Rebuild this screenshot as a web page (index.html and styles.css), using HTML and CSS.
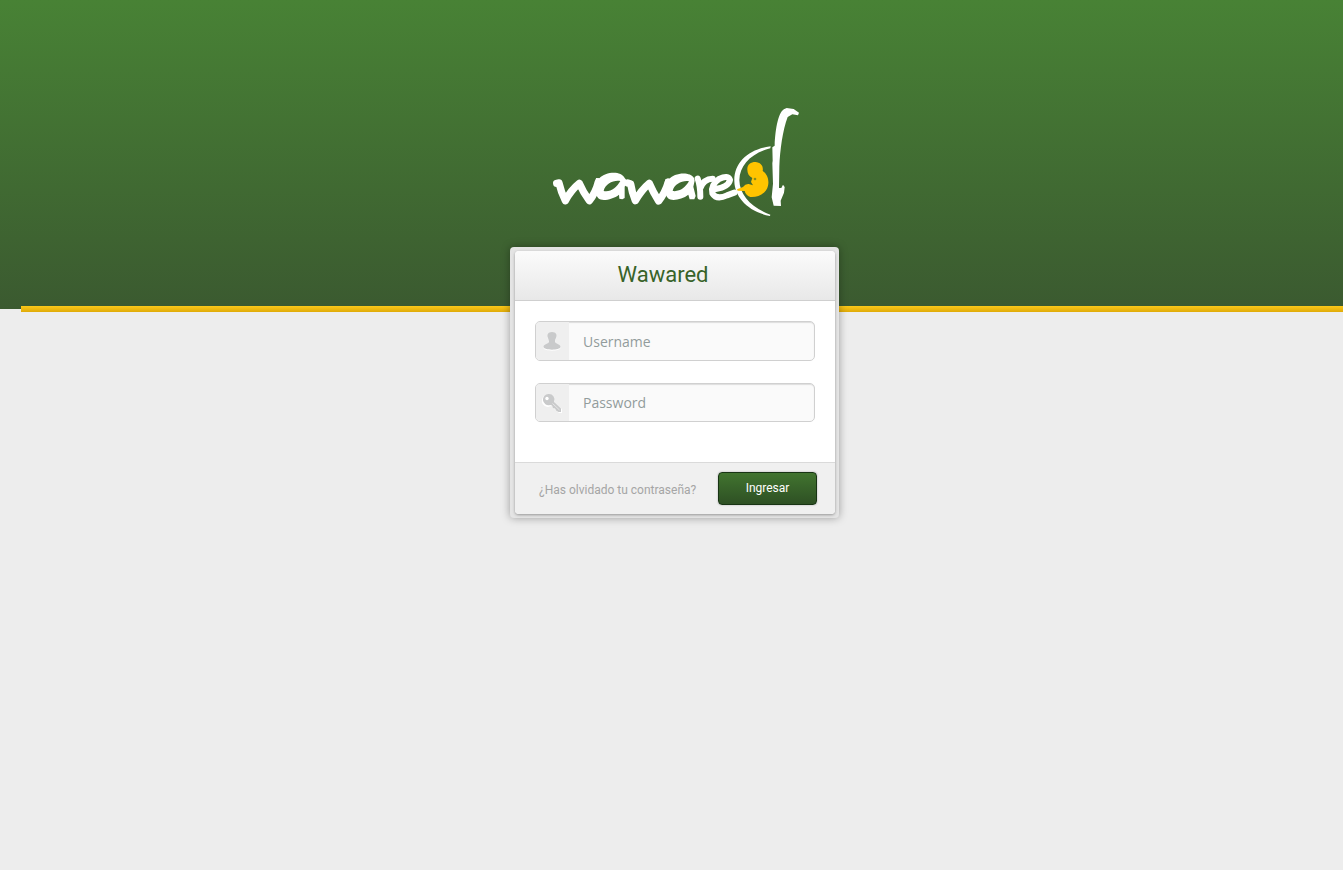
FILE: index.html
```html
<!DOCTYPE html>
<html lang="es">
<head>
<meta charset="utf-8">
<meta name="viewport" content="width=device-width, initial-scale=1">
<title>Wawared</title>
<link rel="stylesheet" href="styles.css">
</head>
<body>
<div class="backdrop"></div>
<main class="page">
  <svg class="logo" viewBox="15 24 747 324" role="img" aria-label="Wawared">
    <g class="letters">
      <path d="M35 250L42 249Q48 276 61 302Q78 270 103 250Q114 276 133 302Q152 278 160 246"/>
      <path d="M248 249L257 252Q261 278 271 302Q289 270 313 250Q324 276 341 303Q360 279 370 246"/>
      <path class="fine" d="M458 236Q466 257 466 290M466 265Q476 236 503 236"/>
      <path class="fine" d="M512 267Q550 261 555 240Q550 224 522 237Q496 255 502 280Q515 301 546 286L568 278"/>
    </g>
    <path class="white" fill-rule="evenodd" d="M153 234L163 235C181 215 228 211 239 234L244 240L239 262V294L232 298L223 296L222 284C204 298 171 306 160 295C149 282 149 255 153 234ZM176 273C198 277 215 262 226 243C207 239 180 251 176 273Z"/>
    <path class="white" fill-rule="evenodd" d="M361 238L371 239C387 217 435 213 447 234L449 242L445 260L452 288L448 298L434 298L430 284C412 298 381 305 369 295C358 282 356 258 361 238ZM383 273C405 276 421 262 432 244C414 240 387 252 383 273Z"/>
    <g transform="translate(375 0)">
      <path class="white" d="M302 139L301 145C245 159 209 195 208 240C209 286 244 322 301 344L300 348C233 335 194 291 193 244C191 185 239 147 302 139Z"/>
      <path class="white" d="M350 24L371 27L387 38L384 46L367 43L353 51C338 91 330 150 328 200L327 264L334 264L339 254L344 261L342 278L332 302L333 318L311 317L305 292L309 251L307 190L308 182L307 142L314 137C316 82 326 32 345 26Z"/>
      <path class="baby" d="M232 209C231 194 242 186 256 186C272 187 281 198 278 213C292 222 298 240 294 257C290 278 265 293 241 291C231 288 226 281 224 273L203 272L201 268L219 261Q226 251 236 252L249 256L243 246L247 234C237 229 232 220 232 209Z"/>
      <circle class="eye" cx="255" cy="237" r="4"/>
    </g>
  </svg>
  <form class="card">
    <div class="panel">
      <header class="title"><h1>Wawared</h1></header>
      <div class="fields">
        <label class="field">
          <span class="badge">
            <svg viewBox="0 0 18 20" width="18" height="20" aria-hidden="true">
              <path class="glow" d="M9 2C13 2 14.500 5 13 8C12 10 12 11 12 12C13 14 17.500 14 17.500 17C17 20.500 1 20.500 .5 17C.5 14 5 14 6 12C6 11 5.500 10 5 8C3.500 5 5 2 9 2Z"/>
              <path class="shape" d="M9 1C13 1 14.500 4 13 7C12 9 12 10 12 11C13 13 17.500 13 17.500 16C17 19.500 1 19.500 .5 16C.5 13 5 13 6 11C6 10 5.500 9 5 7C3.500 4 5 1 9 1Z"/>
            </svg>
          </span>
          <input type="text" placeholder="Username" aria-label="Username" autocomplete="username">
        </label>
        <label class="field short">
          <span class="badge">
            <svg viewBox="0 0 20 20" width="20" height="20" aria-hidden="true">
              <path class="glow" d="M7 2A6 6 0 1 0 9 13L12 14L13 17L15 18L17 20H20V16L12 10A6 6 0 0 0 7 2Z"/>
              <path class="shape" d="M6.500 1A5.600 5.600 0 1 0 8 12L10 12.500L11 15L13 15.500L14 17.500L16.500 19H19V15.500L12 9A5.600 5.600 0 0 0 6.500 1Z"/>
              <circle class="hole" cx="5" cy="5.500" r="1.700"/>
              <path class="groove" d="M10.500 10.500L17.500 17"/>
            </svg>
          </span>
          <input type="password" placeholder="Password" aria-label="Password" autocomplete="current-password">
        </label>
      </div>
      <footer class="actions">
        <a href="#">¿Has olvidado tu contraseña?</a>
        <button type="submit">Ingresar</button>
      </footer>
    </div>
  </form>
</main>
</body>
</html>
```
FILE: styles.css
```css
* {
  box-sizing: border-box;
}

body {
  margin: 0;
  min-height: 100vh;
  background: #ededed;
  font-family: Roboto, "Liberation Sans", sans-serif;
}

.backdrop {
  position: absolute;
  top: 0;
  left: 0;
  right: 0;
  height: 309px;
  background: linear-gradient(#488235, #3b5a30);
}

.backdrop::after {
  content: "";
  position: absolute;
  top: 306px;
  left: 21px;
  right: 0;
  height: 6px;
  background: linear-gradient(#fbc91a, #dfaa08);
}

.page {
  position: relative;
  display: flex;
  flex-direction: column;
  align-items: center;
  gap: 31px;
  padding: 108px 16px 40px 22px;
}

.logo {
  width: 249px;
  height: 108px;
}

.letters {
  fill: none;
  stroke: #fff;
  stroke-width: 22;
  stroke-linecap: round;
  stroke-linejoin: round;
}

.fine {
  stroke-width: 18;
}

.white {
  fill: #fff;
}

.baby {
  fill: #ffc400;
}

.eye {
  fill: #8a8e1b;
}

.card {
  width: 100%;
  max-width: 329px;
  padding: 4px 4px 4px 5px;
  border-radius: 4px;
  background: #e4e4e4;
  box-shadow: 0 0 8px rgba(0, 0, 0, 0.35);
}

.panel {
  overflow: hidden;
  border-radius: 4px;
  background: #fff;
  box-shadow: 0 1px 3px rgba(0, 0, 0, 0.35);
}

.title {
  height: 50px;
  padding-right: 24px;
  border-bottom: 1px solid #cfcfcf;
  background: linear-gradient(#fbfbfb, #e8e8e8);
}

.title h1 {
  margin: 0;
  color: #386329;
  font-size: 22px;
  font-weight: 400;
  line-height: 48px;
  text-align: center;
}

.fields {
  display: grid;
  gap: 22px;
  padding: 20px 20px 40px;
}

.field {
  display: flex;
  height: 40px;
  overflow: hidden;
  border: 1px solid #d0d0d0;
  border-radius: 5px;
  background: #fafafa;
  box-shadow: inset 0 1px 1px #ddd;
}

.field.short {
  height: 39px;
}

.badge {
  display: grid;
  flex: 0 0 33px;
  place-items: center;
  padding-right: 1px;
  background: #efefef;
}

.shape {
  fill: #c9cacb;
}

.glow,
.hole {
  fill: #fff;
}

.groove {
  fill: none;
  stroke: #e6e6e6;
}

.field input {
  flex: 1;
  min-width: 0;
  padding: 0 14px;
  border: 0;
  outline: 0;
  background: transparent;
  color: #555;
  font: 14px "Open Sans", sans-serif;
}

.field input::placeholder {
  color: #929c9c;
  opacity: 1;
}

.actions {
  display: flex;
  align-items: center;
  justify-content: space-between;
  height: 52px;
  padding: 0 18px 1px 24px;
  border-top: 1px solid #dadada;
  background: #f0f0f0;
}

.actions a {
  padding-top: 4px;
  color: #a5a5a5;
  font-size: 12px;
  text-decoration: none;
}

.actions button {
  width: 99px;
  height: 33px;
  padding: 0;
  border: 1px solid #183414;
  border-radius: 4px;
  background: linear-gradient(#41742f, #2e5024);
  box-shadow: 0 0 2px rgba(0, 0, 0, 0.3);
  color: #fff;
  font: 12px Roboto, "Liberation Sans", sans-serif;
}
```
